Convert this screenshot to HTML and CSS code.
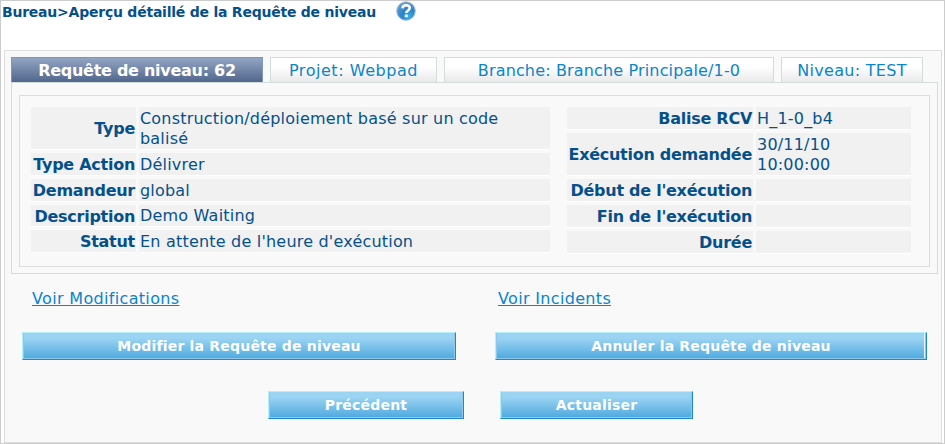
FILE: index.html
```html
<!DOCTYPE html>
<html lang="fr">
<head>
<meta charset="utf-8">
<title>Aperçu détaillé de la Requête de niveau</title>
<link rel="stylesheet" href="styles.css">
</head>
<body>
<div class="page">
  <header class="breadcrumb">
    <h1>Bureau&gt;Aperçu détaillé de la Requête de niveau</h1>
    <svg class="help" width="20" height="20" viewBox="0 0 20 20">
      <defs>
        <radialGradient id="ball" cx="0.65" cy="0.8" r="0.85">
          <stop offset="0" stop-color="#35b0ec"/>
          <stop offset="0.45" stop-color="#2b84c8"/>
          <stop offset="1" stop-color="#6b9fce"/>
        </radialGradient>
      </defs>
      <circle cx="10" cy="10" r="9.3" fill="url(#ball)" stroke="#a9bfd4" stroke-width="1"/>
      <path d="M6.5 7.3C6.7 5 8.2 4.3 10.2 4.3c2.2 0 3.6 1 3.6 2.8 0 2.5-3.5 2.3-3.5 4.8" fill="none" stroke="#fff" stroke-width="2.6"/>
      <rect x="8.8" y="13.4" width="3" height="2.8" rx=".5" fill="#fff"/>
    </svg>
  </header>
  <main class="panel">
    <nav class="tabs">
      <div class="tab tab-request active"><span>Requête de niveau: 62</span></div>
      <div class="tab tab-project"><span>Projet: Webpad</span></div>
      <div class="tab tab-branch"><span>Branche: Branche Principale/1-0</span></div>
      <div class="tab tab-level"><span>Niveau: TEST</span></div>
    </nav>
    <section class="box">
      <div class="details">
        <dl class="facts facts-left">
          <dt>Type</dt><dd>Construction/déploiement basé sur un code<br>balisé</dd>
          <dt>Type Action</dt><dd>Délivrer</dd>
          <dt>Demandeur</dt><dd>global</dd>
          <dt>Description</dt><dd class="raised">Demo Waiting</dd>
          <dt>Statut</dt><dd>En attente de l'heure d'exécution</dd>
        </dl>
        <dl class="facts facts-right">
          <dt>Balise RCV</dt><dd>H_1-0_b4</dd>
          <dt>Exécution demandée</dt><dd>30/11/10<br>10:00:00</dd>
          <dt>Début de l'exécution</dt><dd></dd>
          <dt>Fin de l'exécution</dt><dd></dd>
          <dt>Durée</dt><dd></dd>
        </dl>
      </div>
    </section>
    <div class="links">
      <a href="#">Voir Modifications</a>
      <a href="#">Voir Incidents</a>
    </div>
    <div class="actions">
      <button>Modifier la Requête de niveau</button>
      <button class="cancel">Annuler la Requête de niveau</button>
    </div>
    <div class="actions actions-nav">
      <button>Précédent</button>
      <button>Actualiser</button>
    </div>
  </main>
</div>
</body>
</html>
```
FILE: styles.css
```css
* { box-sizing: border-box; }
body {
  margin: 0;
  background: #fff;
  font: 16px/20px Verdana, "DejaVu Sans", sans-serif;
  letter-spacing: 0.2px;
  color: #06508a;
}
.page {
  width: 945px;
  height: 444px;
  border: 1px solid #ccc;
  padding: 0 2px 0 3px;
  overflow: hidden;
}
.breadcrumb {
  display: flex;
  align-items: flex-start;
  gap: 20px;
  height: 49px;
  margin-left: -2px;
}
h1 {
  width: 374px;
  margin: 1px 0 0;
  font-size: 14px;
  line-height: 20px;
  letter-spacing: -0.23px;
  white-space: nowrap;
}
.help { flex: none; }
.panel {
  width: 938px;
  height: 393px;
  border: 1px solid #ddd;
  background: #f9f9f9;
  padding: 6px 3px 0 6px;
}
.tabs { display: flex; gap: 7px; height: 25px; }
.tab {
  border: 1px solid #d3dbdb;
  border-bottom: 0;
  background: linear-gradient(#fff 35%, #e9e9eb);
  color: #0b84ca;
  line-height: 25px;
  text-align: center;
  white-space: nowrap;
}
.tab-request { width: 252px; }
.tab-project { width: 167px; letter-spacing: 0.55px; }
.tab-branch { width: 330px; letter-spacing: 0.15px; }
.tab-level { width: 142px; letter-spacing: 0.3px; }
.active {
  border-color: #7f94b5;
  background: linear-gradient(#93a5c3, #50668c);
  color: #fff;
  font-weight: bold;
  letter-spacing: -0.27px;
}
.box {
  width: 927px;
  height: 192px;
  border: 1px solid #d3dbdb;
  padding: 12px 7px 6px;
}
.details {
  display: flex;
  gap: 17px;
  width: 911px;
  height: 172px;
  border: 1px solid #ddd;
  padding: 11px;
}
.facts {
  display: grid;
  gap: 3px;
  align-content: start;
  margin: 0;
  white-space: nowrap;
}
.facts-left { grid-template: 43px 23px 23px 22px 23px / 105px 411px; }
.facts-right { grid-template: 23px 43px 23px 23px 23px / 186px 155px; }
.facts dt, .facts dd {
  display: flex;
  align-items: center;
  margin: 0;
  padding: 2px 1px 0;
  background: #f1f1f1;
  border-bottom: 1px solid #fff;
}
.facts dt { justify-content: flex-end; font-weight: bold; letter-spacing: -0.27px; }
.facts .raised { padding-top: 0; }
.links {
  display: grid;
  grid-template-columns: 466px auto;
  margin: 15px 0 0 21px;
  height: 20px;
}
.links a {
  justify-self: start;
  color: #0b84ca;
  letter-spacing: 0.33px;
  text-underline-offset: 1px;
  text-decoration-thickness: 1px;
}
.actions {
  display: grid;
  grid-template-columns: 434px 432px;
  gap: 39px;
  margin: 23px 0 0 11px;
}
.actions-nav {
  grid-template-columns: 196px 193px;
  gap: 36px;
  margin: 31px 0 0 257px;
}
button {
  height: 28px;
  padding: 0;
  border: 1px solid;
  border-color: #b5effa #2089c6 #2089c6 #b5effa;
  background: linear-gradient(#9bd3f3 20%, #4da9de);
  box-shadow: inset -1px -1px #8bc8ee, inset 1px 0 #8bc8ee;
  color: #fff;
  font: bold 14px/24px Verdana, "DejaVu Sans", sans-serif;
  letter-spacing: 0.2px;
}
.cancel { box-shadow: inset -1px -1px #8bc8ee, inset -2px 0 #e8f7ff, inset 1px 0 #8bc8ee; }
```
